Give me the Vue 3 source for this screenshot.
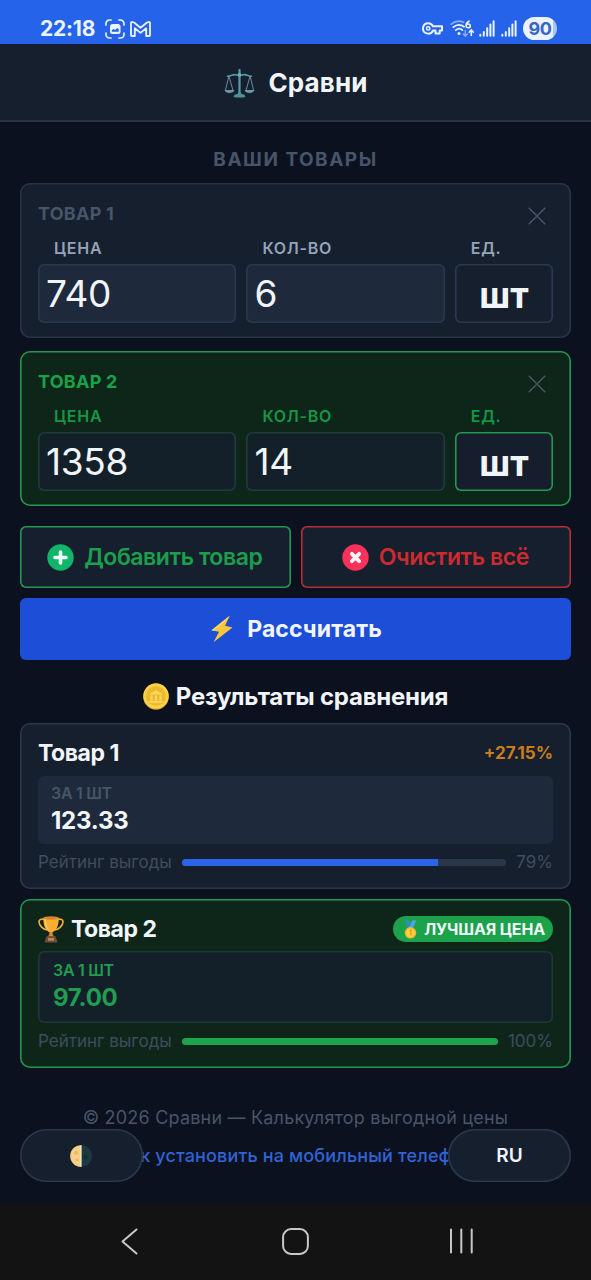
<script setup>
const products = [
  { name: 'Товар 1', price: '740', qty: '6', best: false },
  { name: 'Товар 2', price: '1358', qty: '14', best: true },
]
const results = [
  { name: 'Товар 1', value: '123.33', rating: 79, diff: '+27.15%', best: false },
  { name: 'Товар 2', value: '97.00', rating: 100, best: true },
]
</script>

<template>
  <div class="screen">
    <div class="status">
      <span class="clock">22:18</span>
      <svg class="shot" width="20" height="20" viewBox="0 0 20 20">
        <path d="M1 6V4.500A3.500 3.500 0 0 1 4.500 1H6M14 1h1.500A3.500 3.500 0 0 1 19 4.500V6M19 14v1.500a3.500 3.500 0 0 1-3.500 3.500H14M6 19H4.500A3.500 3.500 0 0 1 1 15.500V14" fill="none" stroke="#eaf3ff" stroke-width="1.700" stroke-linecap="round" />
        <rect x="5" y="5" width="10.500" height="10" rx="2.500" fill="#eaf3ff" />
        <path d="M6.800 12.800v-1.600l1.700-1.300 1.800 1 1.900-1.900 1.500.9v2.900z" fill="#2563eb" />
      </svg>
      <svg class="mail" width="21" height="16" viewBox="0 0 21 16">
        <path d="M1 14.200V2.300Q1 .9 2.400 1L4 1.500l6.500 5.200L17 1.500 18.600 1Q20 .9 20 2.300v11.900q0 .8-.8.8h-3V7.300l-5.700 4.600-5.700-4.600V15h-3q-.8 0-.8-.8z" fill="none" stroke="#eaf3ff" stroke-width="1.800" stroke-linejoin="round" />
      </svg>
      <div class="status-right">
        <svg width="21" height="13" viewBox="0 0 21 13">
          <path d="M6.200 1.200a5.200 5.200 0 1 0 4.800 7.300h2.500v3h4.200v-3H20V4.300h-9A5.200 5.200 0 0 0 6.200 1.200z" fill="none" stroke="#eaf3ff" stroke-width="2" stroke-linejoin="round" />
          <circle cx="6.200" cy="6.400" r="1.700" fill="none" stroke="#eaf3ff" stroke-width="1.500" />
        </svg>
        <svg class="wifi" width="25" height="18" viewBox="0 0 25 18">
          <g fill="none" stroke-width="1.700" stroke-linecap="round">
            <path d="M1.300 4.200C5 .8 9.500.500 13.500 2.300" stroke="#86aff8" />
            <path d="M3.300 7.200C6.600 4.300 10.800 4.300 14.100 6.800M5.800 10.100c2.100-1.800 4.600-1.800 6.600 0" stroke="#eaf3ff" />
            <path d="M19 1.200c-2.600 1.200-3 3.400-2.900 4.600.2 2.700 4.200 2.500 4.200.1 0-2.200-3-2.400-3.900-.7" stroke="#eaf3ff" stroke-width="1.600" />
            <path d="M15.300 10.500v5.500m-2-2 2 2.200 2-2.200" stroke="#86aff8" stroke-width="1.400" />
            <path d="M21.300 15.500V10m-2.100 2.200L21.300 10l2.100 2.200" stroke="#eaf3ff" stroke-width="1.600" />
          </g>
          <circle cx="9" cy="13.500" r="1.500" fill="#eaf3ff" />
        </svg>
        <svg v-for="n in 2" :key="n" class="signal" width="16" height="17" viewBox="0 0 16 17">
          <path d="M1.300 14.800v.900M4.800 12v3.700M8.200 8.300v7.400M11.400 4.600v11.100M14.600 1.200v14.500" stroke="#eaf3ff" stroke-width="2" stroke-linecap="round" />
        </svg>
        <span class="battery">90</span>
      </div>
    </div>

    <header class="header">
      <svg width="31" height="29" viewBox="0 0 31 29" fill="none">
        <path d="M15.500 1v24" stroke="#5d9aa9" stroke-width="2.200" stroke-linecap="round" />
        <path d="M3.500 7.200c4-.2 5.500-2.200 8-1.500 2.500.8 5.500.8 8 0 2.500-.7 4 1.300 8 1.500" stroke="#5d9aa9" stroke-width="1.600" stroke-linecap="round" />
        <circle cx="15.500" cy="5.800" r="1.900" fill="#6fadb9" />
        <path d="M4.900 7 1.400 21.500M4.900 7 9 21.500M26.100 7 22 21.500M26.100 7l3.500 14.500" stroke="#6e98a6" stroke-width=".9" />
        <path d="M.6 21h9.800c-.6 4-9.200 4-9.800 0zM20.600 21h9.800c-.6 4-9.200 4-9.800 0z" fill="#6a9aa6" />
        <path d="M9.500 28c.2-2.200 2-2.700 4-3l1-1.700h2l1 1.700c2 .3 3.800.8 4 3q-6 1.200-12 0z" fill="#4e909e" />
      </svg>
      <h1>Сравни</h1>
    </header>

    <main class="content">
      <h2 class="section-title">ВАШИ ТОВАРЫ</h2>

      <section v-for="p in products" :key="p.name" class="product" :class="{ best: p.best }">
        <div class="product-head">
          <span class="product-name">{{ p.name.toUpperCase() }}</span>
          <svg class="close" width="18" height="18" viewBox="0 0 18 18">
            <path d="M.8.800l16.400 16.400M17.200.800.8 17.200" stroke="#465365" stroke-width="1.600" />
          </svg>
        </div>
        <div class="fields">
          <div><label>ЦЕНА</label><div class="input">{{ p.price }}</div></div>
          <div><label>КОЛ-ВО</label><div class="input">{{ p.qty }}</div></div>
          <div><label>ЕД.</label><div class="unit">шт</div></div>
        </div>
      </section>

      <div class="actions">
        <button class="btn add">
          <svg width="27" height="27" viewBox="0 0 27 27">
            <circle cx="13.500" cy="13.500" r="13.200" fill="#10b569" />
            <path d="M13.500 8v11M8 13.500h11" stroke="#f4fffa" stroke-width="3.600" stroke-linecap="round" />
          </svg>
          <span>Добавить товар</span>
        </button>
        <button class="btn clear">
          <svg width="27" height="27" viewBox="0 0 27 27">
            <circle cx="13.500" cy="13.500" r="13.200" fill="#f8325a" />
            <path d="M9.900 9.900l7.200 7.200M17.100 9.900l-7.200 7.200" stroke="#fff5f7" stroke-width="3.900" stroke-linecap="round" />
          </svg>
          <span>Очистить всё</span>
        </button>
      </div>

      <button class="primary">
        <svg width="22" height="28" viewBox="0 0 22 28">
          <path d="M18.700.700.600 15.300l7.500 1.400L2.500 27.300l19-14.700-7.400-1.800z" fill="#f9c63c" />
          <path d="M18.700.700.600 15.300l2.200.4L16 4.800z" fill="#fbd766" />
        </svg>
        <span>Рассчитать</span>
      </button>

      <h2 class="results-title">
        <svg width="26" height="27" viewBox="0 0 26 27">
          <ellipse cx="13" cy="13.500" rx="12.800" ry="13.200" fill="#dfa52c" />
          <ellipse cx="13" cy="13" rx="12.600" ry="12.600" fill="#fbd247" />
          <circle cx="13" cy="13" r="10" fill="#eeba2d" />
          <path d="M6 11.600 13 7l7 4.600zM7.500 12.500h2v5h-2zM12 12.500h2v5h-2zM16.500 12.500h2v5h-2zM6.300 18h13.400v1.700H6.300z" fill="#fbd760" />
        </svg>
        <span>Результаты сравнения</span>
      </h2>

      <section v-for="r in results" :key="r.name" class="result" :class="{ best: r.best }">
        <div class="result-head">
          <svg v-if="r.best" class="trophy" width="26" height="27" viewBox="0 0 26 27">
            <path d="M6 3.500C3.500 2.600.8 3.400 1 6c.3 4 4 7.200 8 8M20 3.500c2.500-.9 5.200-.1 5 2.500-.3 4-4 7.200-8 8" fill="none" stroke="#f2ae38" stroke-width="1.700" />
            <path d="M5.300 1.800C5 10 8 15.700 13 16.800c5-1.100 8-6.800 7.700-15z" fill="#faae32" />
            <path d="M8 3c.2 6 1.400 9.500 3.600 12-3.200-2.500-4.700-6-4.800-12z" fill="#ffd876" />
            <ellipse cx="13" cy="2" rx="7.700" ry="1.700" fill="#d7872c" />
            <path d="M11.600 16h2.800l.5 3.300 2.300 1.500H8.800l2.300-1.500z" fill="#d98b28" />
            <path d="M8.500 20.300h9l1.800 5.200q.2 1-1 1H7.700q-1.200 0-1-1z" fill="#704a3b" />
            <path d="M10 22h6v2.700h-6z" fill="#b78b50" />
          </svg>
          <span class="result-name">{{ r.name }}</span>
          <span v-if="r.best" class="badge">
            <svg width="13" height="19" viewBox="0 0 13 19">
              <path d="M.7.500h4l2.500 6-2.500 3z" fill="#3189d8" />
              <path d="M12.300.500h-4L4.700 8.500 8.600 9z" fill="#45a6e8" />
              <circle cx="6.500" cy="12.800" r="5.800" fill="#f5b629" />
              <circle cx="6.500" cy="12.800" r="4.400" fill="#ffd143" />
              <path d="M5.500 10.700 7 10v5.500" fill="none" stroke="#db9821" stroke-width="1.200" />
            </svg>
            <span>ЛУЧШАЯ ЦЕНА</span>
          </span>
          <span v-else class="diff">{{ r.diff }}</span>
        </div>
        <div class="value-box">
          <div class="per">ЗА 1 ШТ</div>
          <div class="value">{{ r.value }}</div>
        </div>
        <div class="rating">
          <span class="rating-label">Рейтинг выгоды</span>
          <div class="track"><div class="fill" :style="{ width: r.rating + '%' }"></div></div>
          <span class="percent">{{ r.rating }}%</span>
        </div>
      </section>

      <footer class="footer">
        <p class="copyright">© 2026 Сравни — Калькулятор выгодной цены</p>
        <a class="install">Как установить на мобильный телефон</a>
        <div class="floating">
          <button class="pill">
            <svg class="moon" width="22" height="22" viewBox="0 0 22 22">
              <circle cx="11" cy="11" r="10.800" fill="#193b41" />
              <path d="M11 .200a10.800 10.800 0 0 0 0 21.600z" fill="#f9cf86" />
              <path d="M11 .200v21.600" stroke="#fff0c4" stroke-width="1.200" />
              <circle cx="6" cy="8" r="2" fill="#e9b873" />
              <circle cx="7" cy="15" r="1.600" fill="#e9b873" />
              <circle cx="15.500" cy="12" r="2.300" fill="#123137" />
            </svg>
          </button>
          <button class="pill">RU</button>
        </div>
      </footer>
    </main>

    <nav class="navbar">
      <svg width="17" height="27" viewBox="0 0 17 27"><path d="M15.500 1.500 1.500 13.500l14 12" fill="none" stroke="#c8c8c8" stroke-width="2" stroke-linecap="round" stroke-linejoin="round" /></svg>
      <svg class="home" width="27" height="27" viewBox="0 0 27 27"><rect x="1.100" y="1.100" width="24.800" height="24.800" rx="8" fill="none" stroke="#c8c8c8" stroke-width="2" /></svg>
      <svg width="25" height="26" viewBox="0 0 25 26"><path d="M2 1.500v23M12.300 1.500v23M22.700 1.500v23" stroke="#c8c8c8" stroke-width="2" stroke-linecap="round" /></svg>
    </nav>
  </div>
</template>

<style>
body {
  background: #0b111f;
}
</style>

<style scoped>
* {
  box-sizing: border-box;
}
.screen {
  width: 591px;
  height: 1280px;
  overflow: hidden;
  display: flex;
  flex-direction: column;
  background: #0b111f;
  color: #f1f5f9;
  font-family: Inter, "Liberation Sans", sans-serif;
}
h1, h2, p {
  margin: 0;
}
svg {
  display: block;
  flex: none;
}
button {
  font-family: inherit;
  border: 0;
  padding: 0;
  margin: 0;
  color: inherit;
}
.status {
  height: 44px;
  flex: none;
  background: #2563eb;
  display: flex;
  align-items: center;
  padding: 13px 34px 0 40px;
}
.clock {
  width: 55px;
  font-size: 21px;
  font-weight: 700;
  line-height: 30px;
  letter-spacing: -0.2px;
  color: #eaf3ff;
}
.shot {
  margin-left: 10px;
}
.mail {
  margin-left: 5px;
}
.status-right {
  margin-left: auto;
  display: flex;
  align-items: center;
}
.wifi {
  margin-left: 7px;
}
.signal {
  margin-left: 4px;
}
.signal + .signal {
  margin-left: 6px;
}
.battery {
  width: 34px;
  height: 23px;
  margin-left: 6px;
  border-radius: 12px;
  background: linear-gradient(90deg, #eaf3ff 88%, #a8c5fb 88%);
  color: #3a64c2;
  font-size: 18px;
  font-weight: 700;
  line-height: 23px;
  text-align: center;
  letter-spacing: -0.5px;
}
.header {
  height: 78px;
  flex: none;
  background: #161f2e;
  box-shadow: inset 0 -2px #263347;
  display: flex;
  align-items: center;
  justify-content: center;
  gap: 14px;
}
.header h1 {
  font-size: 26px;
  font-weight: 700;
  line-height: 34px;
  letter-spacing: 0.1px;
}
.content {
  flex: 1;
  display: flex;
  flex-direction: column;
  padding: 22px 20px 0;
}
.section-title {
  text-align: center;
  font-size: 19px;
  font-weight: 700;
  line-height: 32px;
  letter-spacing: 1.5px;
  color: #475569;
  margin-bottom: 7px;
}
.product {
  height: 155px;
  padding: 18px;
  border-radius: 10px;
  background: #161f2e;
  box-shadow: inset 0 0 0 1.600px #26354b;
  margin-bottom: 13px;
}
.product-head {
  display: flex;
  justify-content: space-between;
  height: 36px;
}
.product-name {
  font-size: 18px;
  font-weight: 700;
  line-height: 25px;
  letter-spacing: 0.25px;
  color: #475569;
}
.close {
  margin: 6px 7px 0 0;
}
.fields {
  display: grid;
  grid-template-columns: 198.400px 198.400px 98.200px;
  gap: 10px;
}
.fields label {
  display: block;
  height: 27px;
  padding-left: 16px;
  font-size: 16px;
  font-weight: 600;
  line-height: 23px;
  letter-spacing: 0.75px;
  color: #94a3b8;
}
.input,
.unit {
  height: 59px;
  border-radius: 6px;
  line-height: 59px;
  box-shadow: inset 0 0 0 1.600px #2a384e;
}
.input {
  background: #1e2a3b;
  padding-left: 8px;
  font-size: 37px;
  letter-spacing: -0.3px;
}
.unit {
  text-align: center;
  font-size: 36px;
  font-weight: 700;
  line-height: 62px;
}
.product.best {
  background: #0e2619;
  box-shadow: inset 0 0 0 1.600px #249650;
  margin-bottom: 20px;
}
.best .product-name,
.best label {
  color: #16a34a;
}
.best label {
  opacity: 0.9;
}
.best .input {
  background: #142029;
  box-shadow: inset 0 0 0 1.600px #1d3d36;
}
.best .unit {
  background: #161e2e;
  box-shadow: inset 0 0 0 1.600px #249650;
}
.actions {
  display: grid;
  grid-template-columns: 1fr 1fr;
  gap: 10px;
  margin-bottom: 10px;
}
.btn {
  height: 62px;
  padding-right: 1px;
  border-radius: 6px;
  background: #161f2e;
  display: flex;
  align-items: center;
  justify-content: center;
  gap: 10px;
  font-size: 23px;
  font-weight: 600;
  letter-spacing: -0.44px;
}
.add {
  color: #1b9f4d;
  box-shadow: inset 0 0 0 1.600px #249650;
}
.clear {
  color: #cb2a2e;
  box-shadow: inset 0 0 0 1.600px #b82c34;
}
.primary {
  height: 62px;
  flex: none;
  padding-left: 2px;
  border-radius: 6px;
  background: #1d4ed8;
  display: flex;
  align-items: center;
  justify-content: center;
  gap: 14px;
  font-size: 23px;
  font-weight: 700;
  letter-spacing: 0.1px;
}
.results-title {
  height: 63px;
  padding-top: 9px;
  display: flex;
  align-items: center;
  justify-content: center;
  gap: 7px;
  font-size: 24px;
  font-weight: 700;
  letter-spacing: -0.22px;
}
.result {
  height: 166px;
  flex: none;
  padding: 13px 18px 0;
  border-radius: 10px;
  background: #161f2e;
  box-shadow: inset 0 0 0 1.600px #2a384d;
  margin-bottom: 10px;
}
.result-head {
  display: flex;
  align-items: center;
  height: 34px;
  margin-bottom: 6px;
}
.trophy {
  margin-right: 7px;
}
.result-name {
  font-size: 23px;
  font-weight: 700;
  letter-spacing: -0.45px;
}
.diff {
  margin-left: auto;
  color: #cb7d1e;
  font-size: 17px;
  font-weight: 700;
}
.badge {
  margin-left: auto;
  width: 160px;
  height: 26px;
  padding-right: 8px;
  border-radius: 13px;
  background: #1ba24b;
  display: flex;
  align-items: center;
  justify-content: flex-end;
  gap: 7px;
  font-size: 16px;
  font-weight: 700;
  letter-spacing: -0.15px;
  white-space: nowrap;
}
.value-box {
  height: 68px;
  padding: 6px 13px 0;
  border-radius: 6px;
  background: #1e2a3b;
}
.per {
  font-size: 16px;
  line-height: 22px;
  font-weight: 600;
  letter-spacing: -0.3px;
  color: #475569;
}
.value {
  font-size: 24px;
  line-height: 33px;
  font-weight: 700;
  letter-spacing: -0.25px;
}
.rating {
  display: flex;
  align-items: center;
  height: 36px;
  gap: 10px;
  font-size: 17px;
  color: #3f4c5f;
}
.track {
  flex: 1;
  height: 7px;
  border-radius: 4px;
  overflow: hidden;
  background: #2a374b;
}
.fill {
  height: 100%;
  background: #2b64e8;
}
.result.best {
  height: 169px;
  background: #0e2619;
  box-shadow: inset 0 0 0 1.600px #249650;
  margin-bottom: 0;
}
.best .result-head {
  margin-bottom: 5px;
}
.best .value-box {
  height: 72px;
  padding: 8px 15px 0;
  background: #142029;
  box-shadow: inset 0 0 0 1.600px #1c3934;
}
.best .per,
.best .value {
  color: #1f9d50;
}
.best .fill {
  background: #1ea34e;
}
.footer {
  position: relative;
  flex: 1;
  padding-top: 35px;
  text-align: center;
}
.copyright {
  font-size: 18px;
  line-height: 30px;
  letter-spacing: 0.2px;
  color: #475569;
}
.install {
  display: block;
  margin-top: 8px;
  font-size: 18px;
  line-height: 30px;
  font-weight: 500;
  letter-spacing: 0.15px;
  color: #3163d5;
  white-space: nowrap;
}
.floating {
  position: absolute;
  left: 0;
  right: 0;
  top: 61px;
  display: flex;
  justify-content: space-between;
}
.pill {
  width: 123px;
  height: 53px;
  border-radius: 27px;
  background: #161f2e;
  box-shadow: inset 0 0 0 1.600px #2a374c;
  display: flex;
  align-items: center;
  justify-content: center;
  font-size: 19px;
  font-weight: 600;
}
.moon {
  margin-right: 2px;
}
.navbar {
  height: 76px;
  flex: none;
  background: #131313;
  display: flex;
  align-items: center;
  justify-content: space-between;
  padding: 0 117px 2px 121px;
}
.home {
  margin-left: 3px;
}
</style>
